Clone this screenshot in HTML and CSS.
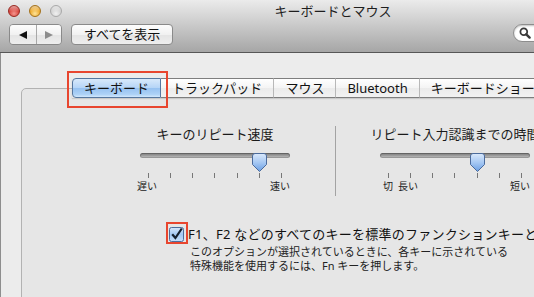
FILE: index.html
```html
<!DOCTYPE html>
<html lang="ja">
<head>
    <meta charset="UTF-8">
    <title>キーボードとマウス</title>
    <link rel="stylesheet" href="styles.css">
</head>
<body>
    <div class="window">
        <header class="toolbar">
            <div class="titlerow">
                <div class="lights">
                    <span class="light close"></span>
                    <span class="light mini"></span>
                    <span class="light zoom"></span>
                </div>
                <div class="title">キーボードとマウス</div>
                <div></div>
            </div>
            <div class="toolrow">
                <div class="nav">
                    <button class="nav-btn"><svg width="8" height="8" viewBox="0 0 8 8"><polygon points="8,0 8,8 0,4" fill="#111"/></svg></button>
                    <button class="nav-btn"><svg width="8" height="8" viewBox="0 0 8 8"><polygon points="0,0 0,8 8,4" fill="#8d8d8d"/></svg></button>
                </div>
                <button class="btn">すべてを表示</button>
                <div class="search">
                    <svg width="12" height="12" viewBox="0 0 12 12"><circle cx="4.8" cy="4.8" r="3.4" fill="none" stroke="#3a3a3a" stroke-width="1.8"/><line x1="7.3" y1="7.3" x2="10.6" y2="10.6" stroke="#3a3a3a" stroke-width="2.4" stroke-linecap="round"/></svg>
                </div>
            </div>
        </header>

        <main class="content">
            <nav class="tabs">
                <span class="tab active">キーボード</span>
                <span class="tab">トラックパッド</span>
                <span class="tab">マウス</span>
                <span class="tab">Bluetooth</span>
                <span class="tab">キーボードショートカット</span>
            </nav>

            <section class="panel">
                <div class="sliders">
                    <div class="group">
                        <div class="slider-title">キーのリピート速度</div>
                        <div class="slider">
                            <div class="track"></div>
                            <svg class="thumb" style="left: 112px" width="15" height="19" viewBox="0 0 15 19">
                                <defs><linearGradient id="th1" x1="0" y1="0" x2="0" y2="1"><stop offset="0" stop-color="#dbe9fb"/><stop offset="0.5" stop-color="#a6c8f3"/><stop offset="1" stop-color="#6b9fe3"/></linearGradient></defs>
                                <path d="M3 0.5 H12 Q14.5 0.5 14.5 3 V11.5 L7.5 18.5 L0.5 11.5 V3 Q0.5 0.5 3 0.5 Z" fill="url(#th1)" stroke="#4b6b9c"/>
                            </svg>
                        </div>
                        <div class="ticks"><i></i><i></i><i></i><i></i><i></i><i></i><i></i></div>
                        <div class="labels labels-rate">
                            <span>遅い</span>
                            <span>速い</span>
                        </div>
                    </div>
                    <div class="group group-delay">
                        <div class="slider-title">リピート入力認識までの時間</div>
                        <div class="slider">
                            <div class="track"></div>
                            <svg class="thumb" style="left: 90px" width="15" height="19" viewBox="0 0 15 19">
                                <defs><linearGradient id="th2" x1="0" y1="0" x2="0" y2="1"><stop offset="0" stop-color="#dbe9fb"/><stop offset="0.5" stop-color="#a6c8f3"/><stop offset="1" stop-color="#6b9fe3"/></linearGradient></defs>
                                <path d="M3 0.5 H12 Q14.5 0.5 14.5 3 V11.5 L7.5 18.5 L0.5 11.5 V3 Q0.5 0.5 3 0.5 Z" fill="url(#th2)" stroke="#4b6b9c"/>
                            </svg>
                        </div>
                        <div class="ticks"><i></i><i></i><i></i><i></i><i></i><i></i><i></i></div>
                        <div class="labels labels-delay">
                            <span class="lbl-off">切</span>
                            <span>長い</span>
                            <span class="lbl-end">短い</span>
                        </div>
                    </div>
                </div>

                <div class="check">
                    <span class="check-box">
                        <svg width="15" height="15" viewBox="0 0 15 15">
                            <defs><linearGradient id="cb" x1="0" y1="0" x2="0" y2="1"><stop offset="0" stop-color="#d6e7fb"/><stop offset="0.5" stop-color="#a4c9f3"/><stop offset="1" stop-color="#c6e0fb"/></linearGradient></defs>
                            <rect x="0.5" y="0.5" width="14" height="14" rx="2" fill="url(#cb)" stroke="#4d6d9c"/>
                            <path d="M3.2 7.2 L6.4 11 L12.8 1.5" fill="none" stroke="#15202e" stroke-width="2.2"/>
                        </svg>
                    </span>
                    <span>F1、F2 などのすべてのキーを標準のファンクションキーとして使用</span>
                </div>
                <p class="desc">このオプションが選択されているときに、各キーに示されている<br>特殊機能を使用するには、Fn キーを押します。</p>
            </section>
        </main>
    </div>
</body>
</html>
```

FILE: styles.css
```css
body {
    margin: 0;
    width: 534px;
    height: 297px;
    overflow: hidden;
    font-family: "Noto Sans", "Noto Sans CJK JP", sans-serif;
    color: #111;
}

.window {
    width: 666px;
}

/* title bar + toolbar */
.toolbar {
    height: 52px;
    border-bottom: 1px solid #575757;
    background: linear-gradient(#ebebeb, #a6a6a6);
}

.titlerow {
    display: grid;
    grid-template-columns: 1fr auto 1fr;
    align-items: center;
    height: 22px;
}

.lights {
    display: flex;
    gap: 9px;
    padding-left: 8px;
}

.light {
    width: 12px;
    height: 12px;
    border-radius: 50%;
    box-sizing: border-box;
}

.close {
    background: linear-gradient(rgba(255,255,255,0.55), rgba(255,255,255,0) 55%),
                radial-gradient(circle at 50% 75%, #f4958d, #d8453e 55%, #a8241e);
    border: 1px solid #98271f;
}

.mini {
    background: linear-gradient(rgba(255,255,255,0.55), rgba(255,255,255,0) 55%),
                radial-gradient(circle at 50% 75%, #fde39a, #eeab2e 55%, #b87a12);
    border: 1px solid #a4711a;
}

.zoom {
    background: linear-gradient(rgba(255,255,255,0.55), rgba(255,255,255,0) 55%),
                radial-gradient(circle at 50% 75%, #f0f0f0, #d2d2d2 55%, #bababa);
    border: 1px solid #a9a9a9;
}

.title {
    font-size: 13px;
    line-height: 16px;
    color: #1e1e1e;
}

.toolrow {
    display: flex;
    align-items: flex-start;
    padding: 2px 10px 0 9px;
}

.nav {
    display: flex;
    border: 1px solid #8a8a8a;
    border-radius: 4px;
    overflow: hidden;
}

.nav-btn {
    width: 26px;
    height: 19px;
    padding: 0;
    border: 0;
    display: flex;
    align-items: center;
    justify-content: center;
    background: linear-gradient(#fdfdfd, #f1f1f1 50%, #e4e4e4 51%, #eeeeee);
}

.nav-btn + .nav-btn {
    width: 25px;
    border-left: 1px solid #a8a8a8;
}

.btn {
    margin-left: 9px;
    width: 102px;
    height: 21px;
    padding: 0;
    border: 1px solid #8a8a8a;
    border-radius: 4px;
    background: linear-gradient(#fdfdfd, #f1f1f1 50%, #e4e4e4 51%, #eeeeee);
    font-family: inherit;
    font-size: 13px;
    line-height: 19px;
    color: #111;
}

.search {
    margin-left: auto;
    width: 143px;
    height: 18px;
    box-sizing: border-box;
    border: 1px solid #8d8d8d;
    border-radius: 9px;
    background: #fff;
    box-shadow: inset 0 1px 2px rgba(0,0,0,0.25);
    display: flex;
    align-items: center;
    padding-left: 5px;
}

/* content */
.content {
    height: 244px;
    border-left: 1px solid #8e8e8e;
    background: #ececec;
    padding: 25px 20px 0 20px;
}

.tabs {
    display: flex;
    position: relative;
    z-index: 1;
    height: 20px;
    margin: 0 0 -10px 51px;
    box-shadow: 0 1px 1px rgba(0,0,0,0.12);
}

.tab {
    box-sizing: border-box;
    height: 20px;
    padding: 0 11px;
    border-top: 1px solid #7e7e7e;
    border-bottom: 1px solid #7e7e7e;
    border-right: 1px solid #b8b8b8;
    background: linear-gradient(#ffffff, #f4f4f4 50%, #ebebeb 51%, #f2f2f2);
    font-size: 13px;
    line-height: 18px;
    white-space: nowrap;
    color: #111;
}

.tab.active {
    position: relative;
    border: 1px solid #56779f;
    border-radius: 4px 0 0 4px;
    background: linear-gradient(#d8e9fb, #b6d5f7 48%, #97c2f1 52%, #acd1f6 85%, #d2e8fd);
}

.tab.active::after {
    content: "";
    position: absolute;
    left: -6px;
    top: -8px;
    right: -8px;
    bottom: -11px;
    border: 2px solid #e8462f;
}

.panel {
    height: 300px;
    border: 1px solid #b2b2b2;
    border-radius: 5px;
    background: #e6e6e6;
}

.sliders {
    display: flex;
    align-items: flex-start;
    padding: 37px 0 0 112px;
}

.group {
    width: 150px;
    padding: 0 6px;
}

.group-delay {
    margin-left: 39px;
    padding: 0 44px 4px;
    border-left: 1px solid #a3a3a3;
}

.slider-title {
    font-size: 13px;
    line-height: 16px;
    text-align: center;
    white-space: nowrap;
    margin: 0 -6px;
    color: #1a1a1a;
}

.group-delay .slider-title {
    margin: 0 -44px;
}

.slider {
    position: relative;
    height: 19px;
    margin-top: 11px;
}

.track {
    margin-top: 4px;
    height: 5px;
    border-radius: 3px;
    background: linear-gradient(#767676, #a3a3a3 60%, #c9c9c9);
    box-shadow: inset 0 0 0 1px rgba(0,0,0,0.2);
}

.thumb {
    position: absolute;
    top: 0;
}

.ticks {
    display: flex;
    justify-content: space-between;
    height: 5px;
    padding: 0 8px;
    margin-top: 1px;
}

.ticks i {
    width: 1px;
    background: #777;
}

.labels {
    display: flex;
    margin-top: 2px;
    font-size: 10px;
    line-height: 12px;
    color: #222;
    white-space: nowrap;
}

.labels-rate {
    justify-content: space-between;
    margin-left: -3px;
}

.labels-delay {
    padding-left: 3px;
}

.lbl-off {
    margin-right: 5px;
}

.lbl-end {
    margin-left: auto;
}

.check {
    display: flex;
    align-items: center;
    gap: 4px;
    margin: 30px 0 0 147px;
    font-size: 13px;
    letter-spacing: 0.25px;
    line-height: 16px;
    white-space: nowrap;
}

.check-box {
    position: relative;
    display: flex;
}

.check-box::after {
    content: "";
    position: absolute;
    left: -3px;
    top: -5px;
    right: -4px;
    bottom: -2px;
    border: 2px solid #e8462f;
}

.desc {
    margin: 3px 0 0 168px;
    font-size: 11px;
    line-height: 14px;
    color: #222;
    white-space: nowrap;
}
```
